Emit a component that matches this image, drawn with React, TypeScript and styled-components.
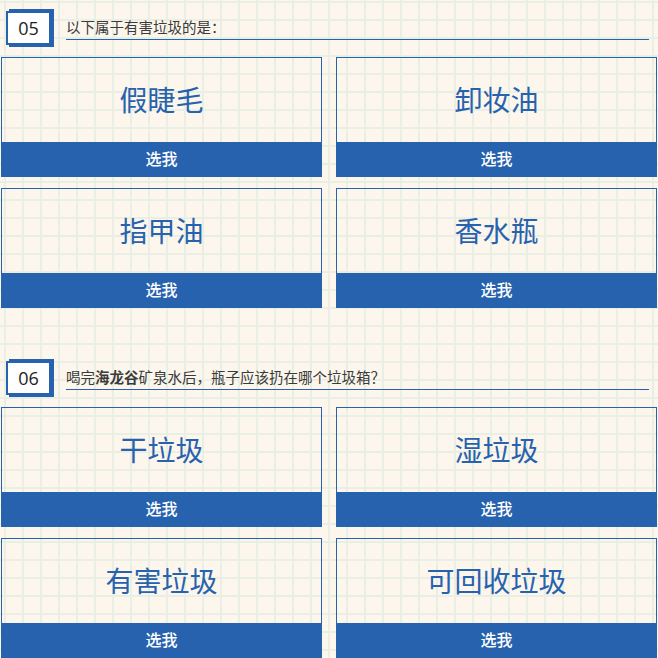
import styled, { createGlobalStyle } from "styled-components";

const BLUE = "#2762ae";

const GlobalStyle = createGlobalStyle`
    html, body {
        margin: 0;
        padding: 0;
    }
    body {
        background-color: #fdf6ec;
        background-image:
            linear-gradient(to right, #e9efe4 2px, transparent 2px),
            linear-gradient(to bottom, #e9efe4 2px, transparent 2px);
        background-size: 18px 18px;
        background-position: 4px 1px;
        font-family: "Noto Sans CJK SC", "Noto Sans", sans-serif;
    }
`;

type Question = {
    no: string;
    title: React.ReactNode;
    options: string[];
};

const questions: Question[] = [
    {
        no: "05",
        title: "以下属于有害垃圾的是：",
        options: ["假睫毛", "卸妆油", "指甲油", "香水瓶"],
    },
    {
        no: "06",
        title: (
            <>
                喝完<b>海龙谷</b>矿泉水后，瓶子应该扔在哪个垃圾箱？
            </>
        ),
        options: ["干垃圾", "湿垃圾", "有害垃圾", "可回收垃圾"],
    },
];

const App = () => {
    return (
        <Page lang="zh-CN">
            <GlobalStyle />
            {questions.map((q) => (
                <Section key={q.no}>
                    <Header>
                        <Badge>{q.no}</Badge>
                        <Title>{q.title}</Title>
                    </Header>
                    <Options>
                        {q.options.map((opt) => (
                            <Card key={opt}>
                                <Label>{opt}</Label>
                                <PickButton>选我</PickButton>
                            </Card>
                        ))}
                    </Options>
                </Section>
            ))}
        </Page>
    );
};

export default App;

const Page = styled.div`
    min-height: 658px;
    width: 658px;
    overflow: hidden;
`;

const Section = styled.section`
    padding: 11px 0 42px 1px;
`;

const Header = styled.div`
    display: flex;
    height: 34px;
    margin-left: 5px;
`;

const Badge = styled.div`
    box-sizing: border-box;
    width: 45px;
    height: 34px;
    background: #ffffff;
    border: 2px solid ${BLUE};
    box-shadow: 3px -2px 0 ${BLUE}, 3px 2px 0 ${BLUE};
    display: flex;
    align-items: center;
    justify-content: center;
    font-family: "Open Sans", "Noto Sans", sans-serif;
    font-size: 18px;
    color: #222;
`;

const Title = styled.div`
    flex: 1;
    box-sizing: border-box;
    height: 29px;
    margin-left: 15px;
    margin-right: 9px;
    padding-bottom: 4px;
    display: flex;
    align-items: flex-end;
    border-bottom: 1px solid ${BLUE};
    font-size: 14.5px;
    line-height: 16px;
    color: #3a3a3a;
    white-space: nowrap;

    b {
        font-weight: 700;
    }
`;

const Options = styled.div`
    display: grid;
    grid-template-columns: 321px 321px;
    gap: 11px 14px;
    margin-top: 12px;
`;

const Card = styled.div`
    display: flex;
    flex-direction: column;
    height: 120px;
`;

const Label = styled.div`
    box-sizing: border-box;
    height: 85px;
    border: 1px solid ${BLUE};
    border-bottom: none;
    display: flex;
    align-items: center;
    justify-content: center;
    padding-bottom: 2px;
    font-size: 28px;
    color: ${BLUE};
`;

const PickButton = styled.div`
    box-sizing: border-box;
    height: 35px;
    padding-bottom: 3px;
    background: ${BLUE};
    color: #ffffff;
    font-size: 16px;
    font-weight: 500;
    display: flex;
    align-items: center;
    justify-content: center;
    cursor: pointer;
`;
